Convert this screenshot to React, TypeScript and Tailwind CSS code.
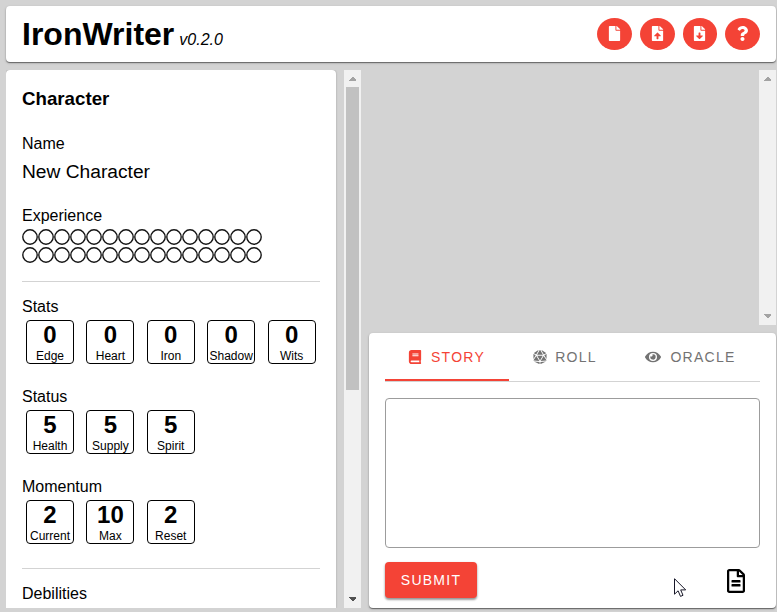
import React from "react";
import { FaBook, FaDiceD20, FaEye, FaFile, FaFileDownload, FaFileUpload, FaQuestion, FaRegFileAlt } from "react-icons/fa";

const cardShadow = "shadow-[0_1px_1px_rgba(0,0,0,0.45),0_1px_3px_rgba(0,0,0,0.18)]";

function RoundButton({ children }: { children: React.ReactNode }) {
  return (
    <button className="flex h-8 w-[34.7px] items-center justify-center rounded-[50%] bg-[#f44336] pb-px text-[15px] text-white">
      {children}
    </button>
  );
}

function Stat({ value, label }: { value: number; label: string }) {
  return (
    <div className="flex h-11 w-12 shrink-0 flex-col items-center rounded-[4px] border border-black">
      <b className="h-7 text-2xl leading-7">{value}</b>
      <span className="text-xs leading-[15px]">{label}</span>
    </div>
  );
}

function StatGroup({ title, items }: { title: string; items: [string, number][] }) {
  return (
    <section className="h-[90px]">
      <h4 className="h-[22px] leading-[18px]">{title}</h4>
      <div className="flex gap-[12.4px] pl-1">
        {items.map(([label, value]) => (
          <Stat key={label} label={label} value={value} />
        ))}
      </div>
    </section>
  );
}

function Arrow({ down = false, dark = false }: { down?: boolean; dark?: boolean }) {
  return (
    <svg width="17" height="17" className={dark ? "fill-[#505050]" : "fill-[#a3a3a3]"} shapeRendering="crispEdges">
      <path d={down ? "M5 6H12V7L9 10H8L5 7Z" : "M5 11H12V10L9 7H8L5 10Z"} />
    </svg>
  );
}

function Experience() {
  return (
    <div className="flex w-60 flex-wrap gap-y-[2px]">
      {Array.from({ length: 30 }, (_, i) => (
        <svg key={i} width="16" height="16" viewBox="0 0 16 16" fill="none" stroke="#151515" strokeWidth="1.4">
          <circle cx="8" cy="8" r="7.2" />
        </svg>
      ))}
    </div>
  );
}

export default function App() {
  return (
    <div className="relative flex h-[612px] w-[777px] flex-col gap-2 overflow-hidden bg-[#d3d3d3] pt-[6px] pr-px pb-1 pl-[6px] font-['Liberation_Sans',Arial,sans-serif] text-base text-black">
      <header className={`flex h-14 shrink-0 items-center justify-between rounded-[4px] bg-white px-4 ${cardShadow}`}>
        <div className="flex items-baseline gap-[5px]">
          <h1 className="text-[32px] leading-9 font-bold">IronWriter</h1>
          <em>v0.2.0</em>
        </div>
        <div className="flex gap-2">
          <RoundButton><FaFile /></RoundButton>
          <RoundButton><FaFileUpload /></RoundButton>
          <RoundButton><FaFileDownload /></RoundButton>
          <RoundButton><FaQuestion /></RoundButton>
        </div>
      </header>

      <main className="flex min-h-0 flex-1 gap-2">
        <div className="flex w-[355px] shrink-0 gap-2 overflow-hidden">
          <aside className="w-[330px] rounded-t-[4px] bg-white px-4 pt-[18px] shadow-[0_0_2px_rgba(0,0,0,0.3)]">
            <h3 className="h-[47px] text-[18.72px] leading-[22px] font-bold">Character</h3>
            <div className="h-[26px] leading-[18px]">Name</div>
            <div className="h-[46px] text-[19.2px] leading-[22px]">New Character</div>
            <div className="h-[22px] leading-[18px]">Experience</div>
            <Experience />
            <hr className="mt-[18px] mb-4 border-[#d3d3d3]" />
            <StatGroup title="Stats" items={[["Edge", 0], ["Heart", 0], ["Iron", 0], ["Shadow", 0], ["Wits", 0]]} />
            <StatGroup title="Status" items={[["Health", 5], ["Supply", 5], ["Spirit", 5]]} />
            <StatGroup title="Momentum" items={[["Current", 2], ["Max", 10], ["Reset", 2]]} />
            <hr className="mb-4 border-[#d3d3d3]" />
            <h4 className="leading-[18px]">Debilities</h4>
          </aside>
          <div className="flex w-[17px] flex-col bg-[#f1f1f1]">
            <Arrow />
            <div className="mx-[2px] h-[303px] bg-[#c1c1c1]" />
            <div className="mt-auto"><Arrow down dark /></div>
          </div>
        </div>

        <div className="flex min-w-0 flex-1 flex-col gap-2">
          <div className="flex h-[255px] shrink-0 justify-end">
            <div className="flex w-[17px] flex-col justify-between bg-[#f1f1f1]">
              <Arrow />
              <Arrow down />
            </div>
          </div>

          <section className={`flex flex-1 flex-col rounded-[4px] bg-white px-4 ${cardShadow}`}>
            <nav className="flex h-[49px] shrink-0 border-b border-[#d3d3d3] text-sm tracking-[1.25px] text-[#737373]">
              <button className="flex w-[124px] items-center justify-center gap-[9px] border-b-2 border-[#f44336] pt-px text-[#f44336]">
                <FaBook className="-ml-px size-[14px]" />STORY
              </button>
              <button className="flex w-[112px] items-center justify-center gap-2 pb-px">
                <FaDiceD20 className="size-[14px]" />ROLL
              </button>
              <button className="flex flex-1 items-center justify-center gap-[9px] pb-px">
                <FaEye className="size-4" />ORACLE
              </button>
            </nav>
            <textarea className="mt-4 h-[150px] shrink-0 resize-none rounded-[4px] border border-[#9c9c9c] bg-white outline-none" />
            <div className="mt-[14px] flex items-center justify-between">
              <button className="h-9 w-[92px] rounded-[4px] bg-[#f44336] text-sm tracking-[1.25px] text-white shadow-[0_2px_2px_rgba(0,0,0,0.3),0_1px_3px_rgba(0,0,0,0.2)]">
                SUBMIT
              </button>
              <FaRegFileAlt className="mt-[2px] mr-[12px] size-6" />
            </div>
          </section>
        </div>
      </main>

      <svg className="absolute top-[578px] left-[674px]" width="13" height="20" viewBox="0 0 13 20" fill="white" stroke="#171728">
        <path d="M.5.7V16.2L4.1 12.8L6.5 18.4L9 17.3L6.7 11.9H11.7Z" />
      </svg>
    </div>
  );
}
